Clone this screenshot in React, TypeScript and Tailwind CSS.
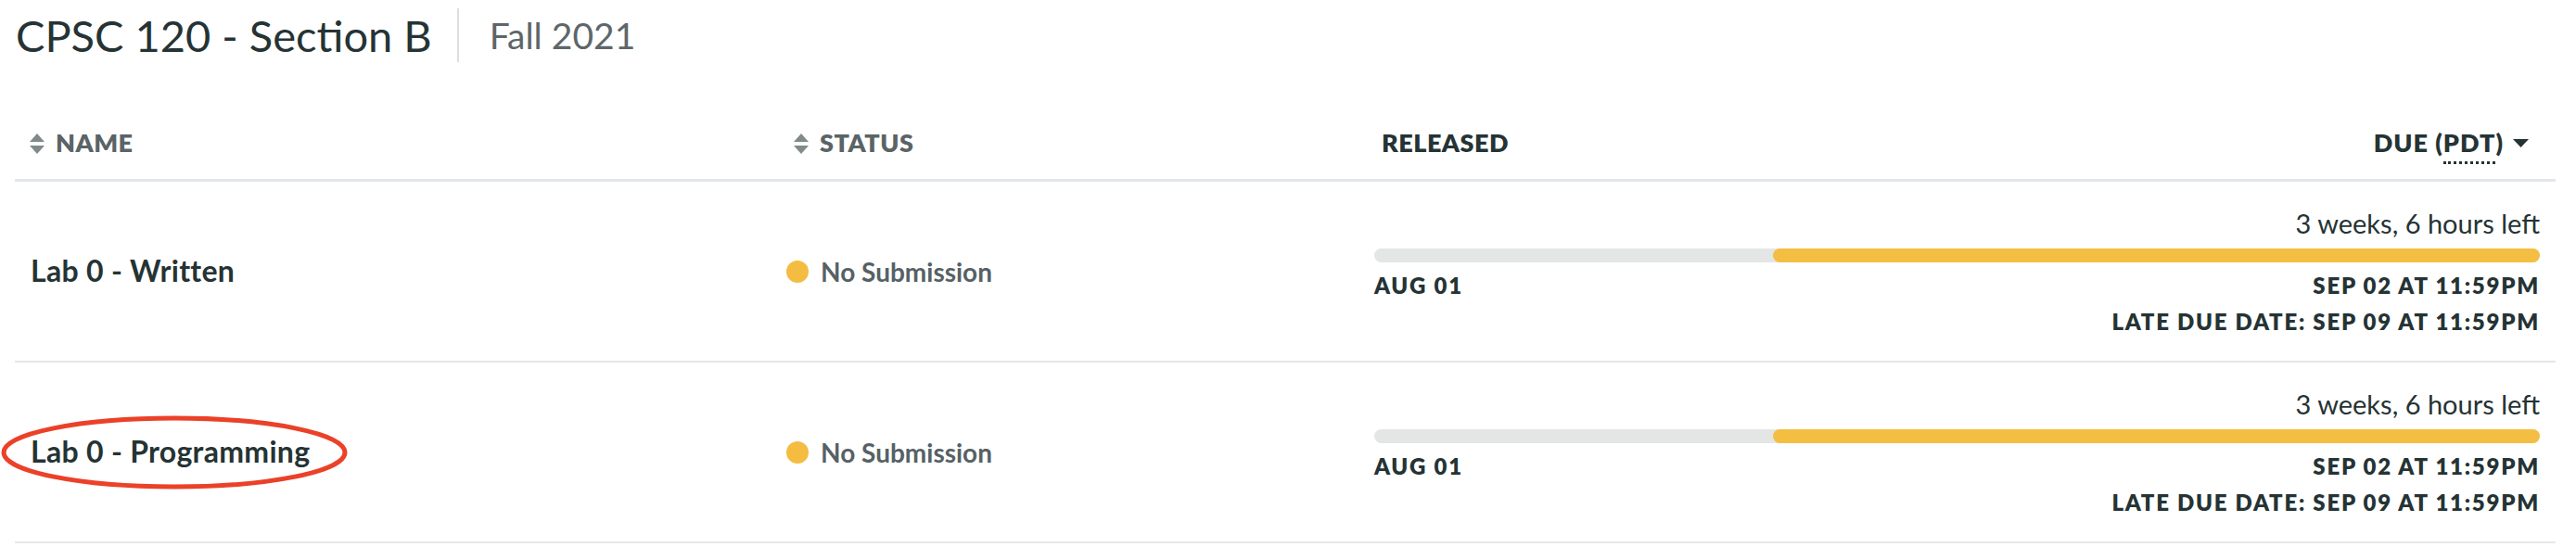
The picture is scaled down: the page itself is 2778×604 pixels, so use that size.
import React from "react";

type Assignment = {
  id: number;
  name: string;
  status: string;
  timeLeft: string;
  released: string;
  due: string;
  lateDue: string;
  progress: number; // fraction of time already elapsed
  highlighted?: boolean;
};

const ASSIGNMENTS: Assignment[] = [
  {
    id: 1,
    name: "Lab 0 - Written",
    status: "No Submission",
    timeLeft: "3 weeks, 6 hours left",
    released: "AUG 01",
    due: "SEP 02 AT 11:59PM",
    lateDue: "LATE DUE DATE: SEP 09 AT 11:59PM",
    progress: 0.342,
  },
  {
    id: 2,
    name: "Lab 0 - Programming",
    status: "No Submission",
    timeLeft: "3 weeks, 6 hours left",
    released: "AUG 01",
    due: "SEP 02 AT 11:59PM",
    lateDue: "LATE DUE DATE: SEP 09 AT 11:59PM",
    progress: 0.342,
    highlighted: true,
  },
];

const FONT = { fontFamily: "Lato, 'Open Sans', sans-serif" };

function SortIcon() {
  return (
    <svg width="16" height="22" viewBox="0 0 16 22" className="shrink-0">
      <path d="M8 0 L16 9 L0 9 Z" fill="#818a8b" />
      <path d="M0 13 L16 13 L8 22 Z" fill="#818a8b" />
    </svg>
  );
}

function CaretDown() {
  return (
    <svg width="17" height="9" viewBox="0 0 17 9" className="shrink-0">
      <path d="M0 0 L17 0 L8.5 9 Z" fill="#253334" />
    </svg>
  );
}

export default function App() {
  return (
    <div className="w-[2778px] h-[604px] bg-white text-[#253334]" style={FONT}>
      {/* Course header */}
      <div className="flex items-center h-[58px] mt-[9px] pl-[17px]">
        <h1 className="text-[47px] leading-none font-normal">CPSC 120 - Section B</h1>
        <div className="w-[2px] h-full bg-[#dcdfe2] ml-[27px]" />
        <span className="text-[39px] leading-none text-[#5d6769] ml-[33px]">Fall 2021</span>
      </div>

      <div className="ml-[16px] mr-[22px] mt-[49px]">
        {/* Table header */}
        <div className="grid grid-cols-[824px_626px_1fr] h-[80px] border-b-[3px] border-[#e2e6ea] items-center text-[27px] font-extrabold tracking-[0.5px]">
          <div className="flex items-center gap-[12px] pl-[16px] text-[#5a6466]">
            <SortIcon />
            <span>NAME</span>
          </div>
          <div className="flex items-center gap-[12px] pl-[16px] text-[#5a6466]">
            <SortIcon />
            <span>STATUS</span>
          </div>
          <div className="flex items-center justify-between pl-[24px] pr-[29px]">
            <span>RELEASED</span>
            <span className="flex items-center gap-[10px]">
              <span className="tracking-[1px]">
                DUE (<span className="border-b-[3px] border-dotted border-[#253334] pb-[4px]">PDT</span>)
              </span>
              <CaretDown />
            </span>
          </div>
        </div>

        {/* Rows */}
        {ASSIGNMENTS.map((a) => (
          <div
            key={a.id}
            className="grid grid-cols-[824px_626px_1fr] h-[195px] border-b-2 border-[#e4e7ea] items-center"
          >
            <div className="relative pl-[17px]">
              <span className="text-[32px] font-bold leading-none tracking-[0.3px]">{a.name}</span>
              {a.highlighted && (
                <svg
                  width="376"
                  height="82"
                  viewBox="0 0 376 82"
                  className="absolute left-[-16px] top-1/2 -translate-y-1/2 pointer-events-none"
                >
                  <ellipse cx="188" cy="41" rx="184" ry="37" fill="none" stroke="#eb4128" strokeWidth="5" />
                </svg>
              )}
            </div>
            <div className="flex items-center gap-[13px] pl-[8px]">
              <span className="w-[24px] h-[24px] rounded-full bg-[#f4bd41] shrink-0" />
              <span className="text-[28px] font-bold leading-none text-[#566165]">{a.status}</span>
            </div>
            <div className="flex flex-col pl-[16px] pr-[17px]">
              <div className="text-right text-[29px] leading-[34px]">{a.timeLeft}</div>
              <div className="relative mt-[10px] h-[15px] rounded-full bg-[#e4e6e5]">
                <div
                  className="absolute top-0 right-0 h-full rounded-full bg-[#f4be43]"
                  style={{ width: `${(1 - a.progress) * 100}%` }}
                />
              </div>
              <div className="flex justify-between mt-[10px] text-[24px] font-extrabold leading-[30px] tracking-[1.75px]">
                <span>{a.released}</span>
                <span>{a.due}</span>
              </div>
              <div className="text-right mt-[9px] text-[24px] font-extrabold leading-[30px] tracking-[1.75px]">
                {a.lateDue}
              </div>
            </div>
          </div>
        ))}
      </div>
    </div>
  );
}
